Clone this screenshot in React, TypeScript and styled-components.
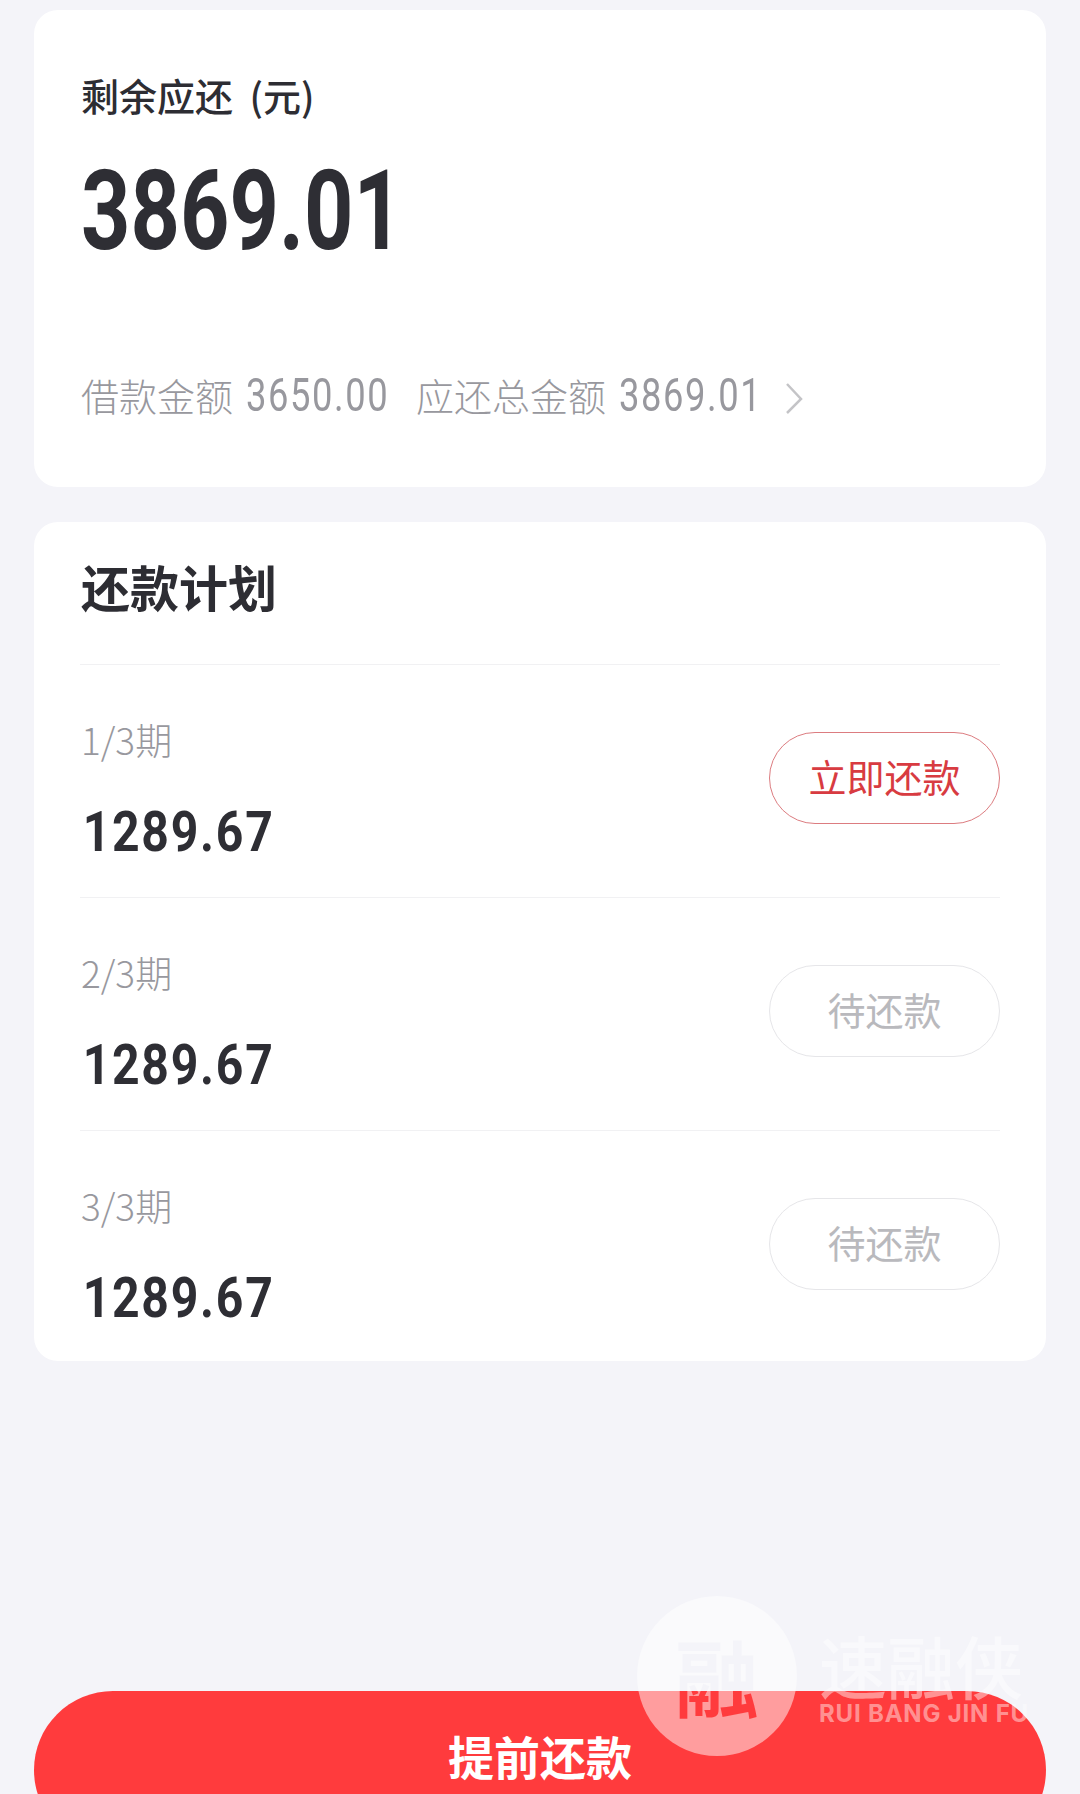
import styled, { createGlobalStyle } from 'styled-components';

const cjk = '"Noto Sans CJK SC", sans-serif';
const digits = '"Roboto", "Noto Sans CJK SC", sans-serif';

const plans = [
  { period: '1/3期', amount: '1289.67', action: '立即还款', active: true },
  { period: '2/3期', amount: '1289.67', action: '待还款', active: false },
  { period: '3/3期', amount: '1289.67', action: '待还款', active: false },
];

function App() {
  return (
    <Page>
      <GlobalStyle />
      <SummaryCard>
        <SummaryLabel>剩余应还 (元)</SummaryLabel>
        <SummaryAmount>3869.01</SummaryAmount>
        <SummaryMeta>
          <MetaItem>
            借款金额<MetaNumber>3650.00</MetaNumber>
          </MetaItem>
          <MetaItem>
            应还总金额<MetaNumber>3869.01</MetaNumber>
          </MetaItem>
          <Chevron viewBox="0 0 18 32" aria-hidden="true">
            <path d="M2 2 L16 17 L2 31" />
          </Chevron>
        </SummaryMeta>
      </SummaryCard>

      <PlanCard>
        <PlanTitle>还款计划</PlanTitle>
        {plans.map((plan) => (
          <PlanRow key={plan.period}>
            <PlanInfo>
              <Period>{plan.period}</Period>
              <Amount>{plan.amount}</Amount>
            </PlanInfo>
            <RowButton $active={plan.active}>{plan.action}</RowButton>
          </PlanRow>
        ))}
      </PlanCard>

      <PrepayButton>提前还款</PrepayButton>

      <Watermark>
        <WatermarkCircle>
          <WatermarkGlyph>融</WatermarkGlyph>
        </WatermarkCircle>
        <WatermarkText>
          <WatermarkName>速融侠</WatermarkName>
          <WatermarkLatin>RUI BANG JIN FU</WatermarkLatin>
        </WatermarkText>
      </Watermark>
    </Page>
  );
}

export default App;

const GlobalStyle = createGlobalStyle`
  html, body {
    margin: 0;
    padding: 0;
    background: #f4f4f9;
  }
`;

const Page = styled.div`
  position: relative;
  display: flex;
  flex-direction: column;
  box-sizing: border-box;
  width: 1080px;
  height: 1794px;
  padding: 10px 34px 0;
  overflow: hidden;
  background: #f4f4f9;
  font-family: ${cjk};
`;

const Card = styled.section`
  flex: none;
  box-sizing: border-box;
  background: #ffffff;
  border-radius: 24px;
`;

const SummaryCard = styled(Card)`
  height: 477px;
  padding: 60px 46px 0 47px;
`;

const SummaryLabel = styled.div`
  font-size: 38px;
  line-height: 50px;
  font-weight: 500;
  word-spacing: 8px;
  color: #2d2d33;
`;

/* the digits in the reference are a narrow DIN cut, so Roboto is squeezed */
const SummaryAmount = styled.div`
  margin-top: 36px;
  font-family: ${digits};
  font-size: 112px;
  line-height: 110px;
  font-weight: 700;
  color: #2e2e34;
  transform: scaleX(0.77);
  transform-origin: left center;
`;

const SummaryMeta = styled.div`
  display: flex;
  align-items: center;
  margin-top: 104px;
  color: #98989e;
  font-size: 38px;
  line-height: 50px;
  font-weight: 300;
`;

const MetaItem = styled.span`
  width: 335px;
  white-space: nowrap;

  & + & {
    width: 369px;
  }
`;

const MetaNumber = styled.span`
  display: inline-block;
  margin-left: 13px;
  font-family: ${digits};
  font-size: 46px;
  font-weight: 400;
  letter-spacing: 2px;
  transform: scaleX(0.79);
  transform-origin: left center;
`;

const Chevron = styled.svg`
  flex: none;
  width: 18px;
  height: 32px;
  margin-top: 6px;
  fill: none;
  stroke: #c4c4c7;
  stroke-width: 2.5;
`;

const PlanCard = styled(Card)`
  margin-top: 35px;
  height: 839px;
  padding: 0 46px;
`;

const PlanTitle = styled.h2`
  margin: 0;
  height: 142px;
  box-sizing: border-box;
  padding: 29px 0 0 1px;
  font-size: 49px;
  line-height: 70px;
  font-weight: 700;
  color: #2d2d33;
`;

const PlanRow = styled.div`
  display: flex;
  align-items: center;
  justify-content: space-between;
  height: 233px;
  box-sizing: border-box;
  border-top: 1px solid #f1f1f3;
`;

const PlanInfo = styled.div`
  padding-top: 16px;
`;

const Period = styled.div`
  padding-left: 1px;
  font-size: 37px;
  line-height: 50px;
  font-weight: 300;
  color: #98989e;
`;

const Amount = styled.div`
  margin-top: 36px;
  padding-left: 3px;
  font-family: ${digits};
  font-size: 55px;
  line-height: 64px;
  font-weight: 700;
  letter-spacing: 2px;
  color: #2e2e34;
  transform: scaleX(0.875);
  transform-origin: left center;
`;

const RowButton = styled.div<{ $active: boolean }>`
  display: flex;
  align-items: center;
  justify-content: center;
  box-sizing: border-box;
  width: 231px;
  height: 92px;
  margin-bottom: 7px;
  padding-bottom: 4px;
  border-radius: 46px;
  border: 1.5px solid ${(p) => (p.$active ? '#dc7c80' : '#e6e6e9')};
  font-size: 38px;
  font-weight: 400;
  color: ${(p) => (p.$active ? '#d83b41' : '#b9b9bd')};
`;

const PrepayButton = styled.button`
  flex: none;
  width: 100%;
  height: 158px;
  margin-top: 330px;
  padding: 0 0 31px;
  border: none;
  border-radius: 79px;
  background: #ff3b3d;
  font-family: ${cjk};
  font-size: 46px;
  font-weight: 700;
  color: #ffffff;
`;

const Watermark = styled.div`
  position: absolute;
  top: 1596px;
  left: 637px;
  display: flex;
  gap: 22px;
  pointer-events: none;
`;

const WatermarkCircle = styled.div`
  display: flex;
  align-items: center;
  justify-content: center;
  width: 160px;
  height: 160px;
  border-radius: 50%;
  background: rgba(255, 255, 255, 0.5);
`;

/* knocked-out look: the glyph takes the colour of what lies behind the circle */
const WatermarkGlyph = styled.span`
  display: block;
  margin-top: -3px;
  font-size: 84px;
  line-height: 100px;
  font-weight: 700;
  color: transparent;
  background: linear-gradient(to bottom, #f4f4f9 0 66px, #ff3b3d 66px);
  -webkit-background-clip: text;
  background-clip: text;
`;

const WatermarkText = styled.div`
  display: flex;
  flex-direction: column;
  padding-top: 32px;
  color: rgba(255, 255, 255, 0.45);
`;

const WatermarkName = styled.div`
  font-size: 68px;
  line-height: 74px;
  font-weight: 500;
`;

const WatermarkLatin = styled.div`
  font-family: "Inter", "Liberation Sans", sans-serif;
  font-size: 24px;
  line-height: 24px;
  font-weight: 700;
  letter-spacing: 0.8px;
  white-space: nowrap;
`;
